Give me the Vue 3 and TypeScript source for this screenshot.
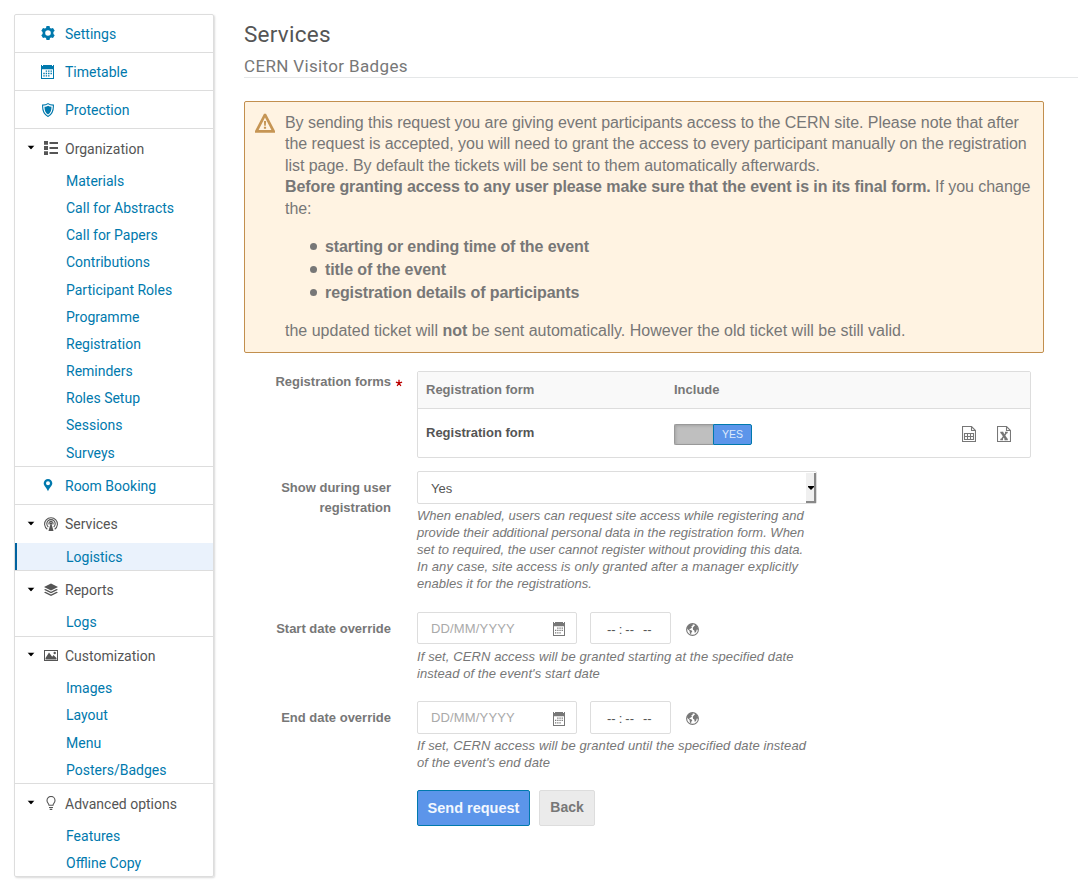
<script setup lang="ts">
import { ref } from 'vue'

interface Section {
  title: string
  icon: string
  items?: string[]
}

const sections: Section[] = [
  { title: 'Settings', icon: 'gear' },
  { title: 'Timetable', icon: 'calendar' },
  { title: 'Protection', icon: 'shield' },
  {
    title: 'Organization',
    icon: 'list',
    items: [
      'Materials', 'Call for Abstracts', 'Call for Papers', 'Contributions', 'Participant Roles',
      'Programme', 'Registration', 'Reminders', 'Roles Setup', 'Sessions', 'Surveys',
    ],
  },
  { title: 'Room Booking', icon: 'pin' },
  { title: 'Services', icon: 'broadcast', items: ['Logistics'] },
  { title: 'Reports', icon: 'stack', items: ['Logs'] },
  { title: 'Customization', icon: 'image', items: ['Images', 'Layout', 'Menu', 'Posters/Badges'] },
  { title: 'Advanced options', icon: 'bulb', items: ['Features', 'Offline Copy'] },
]

const active = ref('Logistics')
const included = ref(true)

const overrides = [
  {
    label: 'Start date override',
    help: ['If set, CERN access will be granted starting at the specified date', "instead of the event's start date"],
  },
  {
    label: 'End date override',
    help: ['If set, CERN access will be granted until the specified date instead', "of the event's end date"],
  },
]
</script>

<template>
  <div class="page">
    <nav class="sidebar">
      <section v-for="s in sections" :key="s.title" class="section" :class="{ long: s.icon === 'list' }">
        <div class="head" :class="{ group: s.items, tall: s.icon === 'list' || s.icon === 'bulb' }">
          <svg v-if="s.items" class="caret" width="8" height="4" viewBox="0 0 8 4"><path d="M.5 0h7L4 4z" /></svg>
          <svg class="icon" :class="s.icon" width="14" height="14" viewBox="0 0 14 14">
            <path v-if="s.icon === 'gear'" fill-rule="evenodd" d="M5.500 0h3l.5 1.900 1.100.6 1.900-.6 1.700 2.800-1.300 1.300v2l1.300 1.300-1.700 2.800-1.900-.6-1.100.6-.5 1.900h-3L5 12.100l-1.100-.6-1.900.6L.3 9.300 1.600 8V6L.3 4.700 2 1.900l1.900.6L5 1.900zM7 4.200a2.800 2.800 0 1 0 0 5.600 2.800 2.800 0 0 0 0-5.600z" />
            <template v-else-if="s.icon === 'calendar'">
              <path fill-rule="evenodd" d="M.5 0h1v1h1V0h9v1h1V0h1v14H.5zM1.500 4.200V13h11V4.200z" />
              <path d="M5.200 5.400h1.400v1.400H5.200zM7.600 5.400H9v1.400H7.600zM10 5.400h1.400v1.400H10zM2.800 7.800h1.400v1.400H2.800zM5.200 7.800h1.400v1.400H5.200zM7.600 7.800H9v1.400H7.600zM10 7.800h1.400v1.400H10zM2.800 10.200h1.400v1.400H2.800zM5.200 10.200h1.400v1.400H5.200zM7.600 10.200H9v1.400H7.600z" />
            </template>
            <template v-else-if="s.icon === 'shield'">
              <path class="line" d="M7 .6Q9 2 12.400 2.100C12.600 7.500 11 11.500 7 13.400 3 11.500 1.400 7.500 1.600 2.100 5 2 7 .6 7 .6z" />
              <path d="M7 2.700Q8.500 3.700 10.500 3.800C10.600 7.500 9.400 10.200 7 11.600 4.600 10.200 3.400 7.500 3.500 3.800 5.500 3.700 7 2.700 7 2.700z" />
            </template>
            <path v-else-if="s.icon === 'list'" d="M0 0h4v3.800H0zM0 5.100h4v3.800H0zM0 10.200h4V14H0zM5.500 1H14v2H5.500zM5.500 6H14v2H5.500zM5.500 11H14v2H5.500z" />
            <path v-else-if="s.icon === 'pin'" fill-rule="evenodd" d="M7 0a4.300 4.300 0 0 1 4.300 4.300C11.300 7 8.500 8.500 7 12.300 5.500 8.500 2.700 7 2.700 4.300A4.300 4.300 0 0 1 7 0zm0 2.300a2 2 0 1 0 0 4 2 2 0 0 0 0-4z" />
            <template v-else-if="s.icon === 'broadcast'">
              <path class="line" d="M3.300 12.300a6.400 6.400 0 1 1 7.400 0M4.300 10a4.200 4.200 0 1 1 5.400 0M5.300 7.500a2 2 0 1 1 3.400 0" />
              <circle cx="7" cy="6.500" r="1.200" />
              <path d="M6.300 7.500h1.400L9.500 14h-5z" />
            </template>
            <template v-else-if="s.icon === 'stack'">
              <path d="M7 .5l7 3.500-7 3.500L0 4z" />
              <path d="M1.500 5.900L0 6.700l7 3.500 7-3.500-1.500-.8L7 8.700zM1.500 8.700L0 9.500 7 13l7-3.500-1.500-.8L7 11.500z" />
            </template>
            <template v-else-if="s.icon === 'image'">
              <path fill-rule="evenodd" d="M0 2h14v11H0zM1 3v9h12V3z" />
              <path d="M1.500 11.500V10L5 4.500l3.200 4.200L9.500 7l3 3v1.500z" />
              <circle cx="10.700" cy="5" r="1.200" />
            </template>
            <template v-else>
              <path class="line" d="M5 9.300C5 7.500 3 6.800 3 4.400a4 4 0 0 1 8 0c0 2.400-2 3.100-2 4.900zM5 11.500h4M5.700 13.400h2.600" />
            </template>
          </svg>
          <span class="title">{{ s.title }}</span>
        </div>
        <a
          v-for="item in s.items"
          :key="item"
          class="item"
          :class="{ active: item === active }"
          @click="active = item"
        >{{ item }}</a>
      </section>
    </nav>

    <main class="main">
      <h1>Services</h1>
      <h2>CERN Visitor Badges</h2>

      <div class="alert">
        <svg class="warn" width="20" height="20" viewBox="0 0 20 20">
          <path fill-rule="evenodd" d="M9 .8h2L20 18v1.700H0V18zM10 4.400L3.600 17h12.800z" />
          <path d="M8.900 8h2.200l-.3 4.800H9.200zM8.900 13.800h2.200v2H8.900z" />
        </svg>
        <div class="message">
          <p class="lead">
            By sending this request you are giving event participants access to the CERN site. Please note that after<br>
            the request is accepted, you will need to grant the access to every participant manually on the registration<br>
            list page. By default the tickets will be sent to them automatically afterwards.<br>
            <b>Before granting access to any user please make sure that the event is in its final form.</b> If you change<br>
            the:
          </p>
          <ul>
            <li>starting or ending time of the event</li>
            <li>title of the event</li>
            <li>registration details of participants</li>
          </ul>
          <p>the updated ticket will <b>not</b> be sent automatically. However the old ticket will be still valid.</p>
        </div>
      </div>

      <form class="form" @submit.prevent>
        <div class="row forms-row">
          <div class="label required">
            <span>Registration forms</span>
            <svg class="star" width="8" height="8" viewBox="0 0 8 8">
              <path d="M4 4.200V.8M4 4.200L.9 3.200M4 4.200l3.100-1M4 4.200L2.100 7M4 4.200L5.900 7" />
            </svg>
          </div>
          <div class="table">
            <div class="tr th"><span>Registration form</span><span>Include</span></div>
            <div class="tr">
              <span>Registration form</span>
              <button type="button" class="toggle" :class="{ off: !included }" @click="included = !included">
                <i></i><em>YES</em>
              </button>
              <div class="files">
                <svg width="14" height="16" viewBox="0 0 14 16">
                  <path class="line" d="M.5.5h9l4 4v11H.5zM9.500.5v4h4" />
                  <path class="line" d="M2.500 7.500h9v6h-9zM2.500 10.500h9M5.500 7.500v6M8.500 7.500v6" />
                </svg>
                <svg width="14" height="16" viewBox="0 0 14 16">
                  <path class="line" d="M.5.5h9l4 4v11H.5zM9.500.5v4h4" />
                  <path class="cross" d="M4.800 6.500l4.700 7" />
                  <path class="line thick" d="M9.500 6.500l-5 7M3.300 6.500h3M8 6.500h2.700M3.300 13.500H6M7.500 13.500h3.300" />
                </svg>
              </div>
            </div>
          </div>
        </div>

        <div class="row select-row">
          <div class="label">Show during user<br>registration</div>
          <div>
            <div class="select">
              <span>Yes</span>
              <div class="drop"><svg width="6" height="4" viewBox="0 0 6 4"><path d="M0 0h6v1L3 4 0 1z" /></svg></div>
            </div>
            <p class="help">
              When enabled, users can request site access while registering and<br>
              <span class="plain">provide their additional personal data in the registration form. When</span><br>
              set to required, the user cannot register without providing this data.<br>
              <span class="wide">In any case, site access is only granted after a manager explicitly</span><br>
              enables it for the registrations.
            </p>
          </div>
        </div>

        <div v-for="o in overrides" :key="o.label" class="row date-row">
          <div class="label">{{ o.label }}</div>
          <div>
            <div class="fields">
              <div class="date">
                <span>DD/MM/YYYY</span>
                <svg width="12" height="14" viewBox="0 0 12 14">
                  <path fill-rule="evenodd" d="M0 0h1v1h1V0h8v1h1V0h1v14H0zM1 4.200V13h10V4.200z" />
                  <path d="M4.200 5.400h1.300v1.300H4.200zM6.400 5.400h1.300v1.300H6.400zM8.600 5.400h1.300v1.300H8.600zM2 7.800h1.300v1.300H2zM4.200 7.800h1.300v1.300H4.200zM6.400 7.800h1.300v1.300H6.400zM8.600 7.800h1.300v1.300H8.600zM2 10.200h1.300v1.300H2zM4.200 10.200h1.300v1.300H4.200zM6.400 10.200h1.300v1.300H6.400z" />
                </svg>
              </div>
              <div class="time"><span>--</span><span>:</span><span>--</span><span class="ampm">--</span></div>
              <svg class="globe" width="13" height="13" viewBox="0 0 13 13">
                <circle class="line" cx="6.500" cy="6.500" r="5.900" />
                <path d="M.8 5L2.500 2l2.500-1 2 .3-.5 1.500-1.300.8.8.9-1.500 1.200-1.200.2.500 1.100 1.500.2 1 1-1 1.500-.3 2.300-1.200-2.200-.3-2L1.800 6.500zM7.800 3.500L9.500 1.800l1.700 1.400 1 2.300-.6 1.500-.8-.6-.7 2.400-1.300 1.200-.5-2.500-1.300-.7-.2-2z" />
              </svg>
            </div>
            <p class="help"><span class="wide">{{ o.help[0] }}</span><br><span class="mid">{{ o.help[1] }}</span></p>
          </div>
        </div>

        <div class="buttons">
          <button type="submit" class="send">Send request</button>
          <button type="button" class="back">Back</button>
        </div>
      </form>
    </main>
  </div>
</template>

<style>
body {
  background: #fff;
  overflow: hidden;
}
</style>

<style scoped>
.page {
  box-sizing: border-box;
  width: 1078px;
  height: 892px;
  padding-top: 14px;
  display: flex;
  align-items: flex-start;
  font-family: "Liberation Sans", Arial, sans-serif;
  color: #777;
  white-space: nowrap;
  overflow: hidden;
}
p, h1, h2, ul { margin: 0; padding: 0; }
svg { display: block; flex: none; fill: currentColor; }
.line { fill: none; stroke: currentColor; stroke-width: 1.1; }
.thick { stroke-width: 1.4; }

.sidebar {
  box-sizing: border-box;
  width: 200px;
  height: 863px;
  margin-left: 14px;
  flex: none;
  border: 1px solid #ddd;
  border-radius: 2px;
  box-shadow: 1px 1px 2px rgba(0, 0, 0, .15);
  font: 14px/20px Roboto, sans-serif;
  color: #0079ad;
}
.section + .section { border-top: 1px solid #ddd; }
.section.long { padding-bottom: .5px; }
.section.long .item { height: 27.160px; }
.head {
  box-sizing: border-box;
  height: 37px;
  padding-left: 26px;
  display: flex;
  align-items: center;
}
.head .icon { margin-right: 10px; }
.head .gear { transform: translateY(-1px); }
.head .calendar { transform: translateX(-.5px); }
.head.group { height: 37.500px; padding: 0 0 0 12px; color: #555; }
.head.tall { height: 38px; }
.head.group .icon { margin-right: 7px; }
.caret { width: 8px; margin-right: 9px; fill: #000; transform: translateY(-.5px); }
.title { padding-top: 1px; }
.item {
  box-sizing: border-box;
  display: block;
  height: 27.220px;
  padding-left: 51px;
  line-height: 29px;
  cursor: pointer;
}
.item.active { padding-left: 49px; border-left: 2px solid #0063a0; background: #eaf2fc; }

.main { margin-left: 30px; width: 834px; flex: none; }
h1 {
  height: 40px;
  font: 400 22.500px/41px Roboto, sans-serif;
  letter-spacing: .25px;
  color: #555;
}
h2 {
  height: 23px;
  border-bottom: 1px solid #e5e7e8;
  font: 400 17px/24px Roboto, sans-serif;
  letter-spacing: .35px;
}
.alert {
  box-sizing: border-box;
  width: 800px;
  height: 252px;
  margin-top: 23px;
  padding: 10px 0 0 10px;
  display: flex;
  border: 1px solid #c28f4e;
  border-radius: 2px;
  background: #fff3e2;
  font-size: 16px;
  line-height: 21.500px;
}
.warn { margin: 1px 10px 0 0; color: #c69554; }
.lead { margin: -.25px 0 0; line-height: 21.500px; letter-spacing: -.05px; }
.lead b { letter-spacing: -.1px; }
.alert ul {
  margin: 15.800px 0 16px;
  padding-left: 25px;
  list-style: none;
  font-weight: bold;
  line-height: 23px;
  letter-spacing: -.1px;
}
.alert li { display: flex; align-items: center; }
.alert li::before {
  content: "";
  width: 7px;
  height: 7px;
  margin-right: 8px;
  border-radius: 50%;
  background: #777;
}

.form { padding-top: 18px; font-size: 13px; }
.row { display: flex; }
.label {
  width: 147px;
  margin-right: 26px;
  flex: none;
  text-align: right;
  font-weight: bold;
  line-height: 20px;
}
.label.required {
  width: 159px;
  margin-right: 14px;
  padding-top: 1px;
  display: flex;
  justify-content: flex-end;
}
.star { margin: 7px 0 0 4px; fill: none; stroke: #b00; stroke-width: 1.300; }
.forms-row { height: 100px; }
.table {
  box-sizing: border-box;
  width: 614px;
  height: 87px;
  border: 1px solid #ddd;
  border-radius: 2px;
  font-weight: bold;
}
.tr {
  display: grid;
  grid-template-columns: 248px 80px 1fr;
  align-items: center;
  height: 48px;
  padding: 0 19px 0 8px;
  color: #555;
}
.tr > span { padding-bottom: 2px; }
.tr.th { height: 36px; border-bottom: 1px solid #ddd; background: #f9f9f9; color: #777; }
.toggle {
  box-sizing: border-box;
  width: 78px;
  height: 21px;
  margin-top: 3px;
  padding: 0;
  display: flex;
  border: 0;
  border-radius: 2px;
  background: none;
  cursor: pointer;
}
.toggle i {
  box-sizing: border-box;
  width: 39px;
  height: 21px;
  border: 1px solid #999;
  border-right: 0;
  border-radius: 2px 0 0 2px;
  background: #bfbfbf;
  box-shadow: inset 1px 1px 3px rgba(0, 0, 0, .15);
}
.toggle em {
  box-sizing: border-box;
  width: 39px;
  height: 21px;
  border: 1px solid #0079ad;
  border-radius: 0 2px 2px 0;
  background: #5c95ea;
  color: #dfeafb;
  font: normal 10.500px/19px "Liberation Sans", Arial, sans-serif;
}
.toggle.off { flex-direction: row-reverse; }
.files { display: flex; justify-content: flex-end; gap: 21px; margin-top: 2px; color: #777; }
.cross { fill: none; stroke: currentColor; stroke-width: 2.400; }

.select-row .label { padding-top: 7px; }
.select-row { height: 141px; }
.select {
  box-sizing: border-box;
  width: 400px;
  height: 33px;
  padding: 1px 0 0 13px;
  display: flex;
  justify-content: space-between;
  border: 1px solid #ddd;
  border-radius: 2px;
  color: #555;
  line-height: 32px;
}
.drop {
  box-sizing: border-box;
  width: 10px;
  height: 30px;
  padding: 2px 0 0 2px;
  display: flex;
  align-items: center;
  border-right: 2px solid #888;
  border-bottom: 2px solid #888;
  background: #f0f0f0;
  color: #000;
}
.help { padding-top: 3px; font-size: 13px; line-height: 17px; font-style: italic; letter-spacing: .025px; }
.plain { letter-spacing: 0; }
.wide { letter-spacing: .1px; }
.mid { letter-spacing: .08px; }

.date-row { height: 89px; }
.date-row .label { padding-top: 7px; }
.fields { display: flex; align-items: flex-start; height: 33px; }
.date, .time {
  box-sizing: border-box;
  height: 32px;
  display: flex;
  align-items: center;
  border: 1px solid #ddd;
  border-radius: 2px;
}
.date-row + .date-row .date, .date-row + .date-row .time { height: 33px; }
.date {
  width: 160px;
  padding: 0 11px 0 13px;
  justify-content: space-between;
}
.date span { color: #aaa; letter-spacing: .15px; }
.date svg { margin-top: 2px; }
.time {
  width: 81px;
  margin-left: 13px;
  padding: 2px 0 0 16px;
  color: #555;
}
.time span { margin-right: 3px; }
.time .ampm { margin-left: 6px; }
.globe { margin: 11px 0 0 15px; }

.buttons { display: flex; padding-left: 173px; gap: 9px; }
.buttons button {
  box-sizing: border-box;
  height: 36px;
  padding: 0;
  border-radius: 2px;
  font: bold 14.500px/34px "Liberation Sans", Arial, sans-serif;
}
.send { width: 113px; border: 1px solid #0079ad; background: #5c95ea; color: #f2f7fe; }
.buttons .back { width: 56px; padding-bottom: 2px; border: 1px solid #ddd; background: #ebebeb; color: #777; font-size: 14px; line-height: 32px; }
</style>
